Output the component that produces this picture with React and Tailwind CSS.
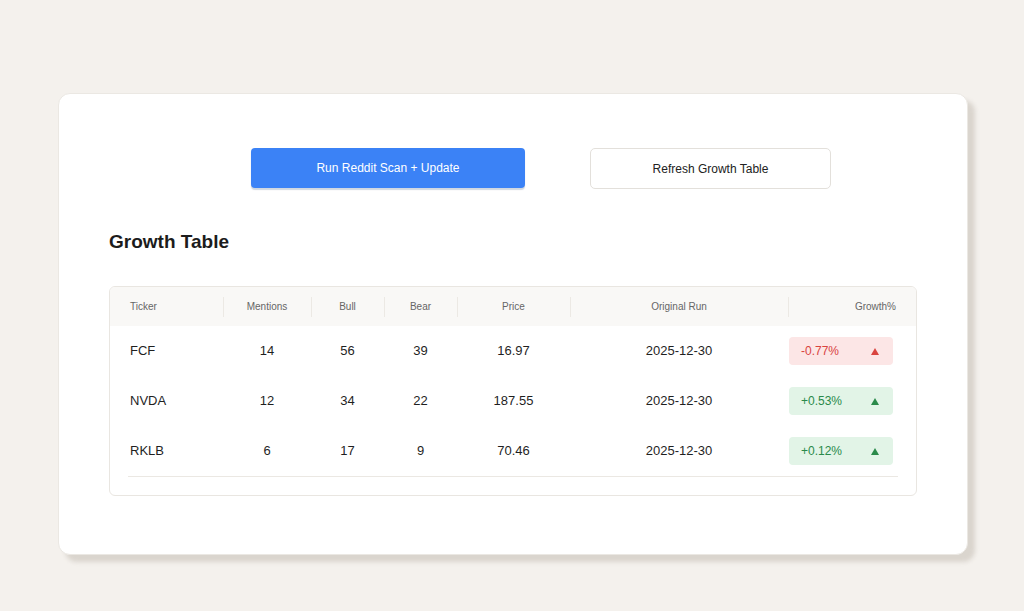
import React from "react";

const rows = [
  { t: "FCF", m: 14, b: 56, be: 39, p: "16.97", d: "2025-12-30", g: "-0.77%", neg: true },
  { t: "NVDA", m: 12, b: 34, be: 22, p: "187.55", d: "2025-12-30", g: "+0.53%", neg: false },
  { t: "RKLB", m: 6, b: 17, be: 9, p: "70.46", d: "2025-12-30", g: "+0.12%", neg: false },
];

const cols = "grid grid-cols-[95px_88px_73px_73px_113px_218px_109px]";

function Sep() {
  return <span className="absolute left-0 top-1/2 h-5 w-px -translate-y-1/2 bg-[#ece9e4]" />;
}

export default function App() {
  return (
    <div
      className="min-h-[611px] w-full bg-[#f4f1ed] pt-[93px] pl-[58px]"
      style={{ fontFamily: '"Liberation Sans", Arial, sans-serif' }}
    >
      <div className="h-[462px] w-[910px] rounded-xl bg-white border border-[#ebe8e3] shadow-[7px_7px_4px_rgba(160,150,135,0.3)] px-[50px] pt-[54px]">
        <div className="flex items-start ml-[142px] gap-[65px]">
          <button className="h-10 w-[274px] rounded-[4px] bg-[#3b82f6] text-[12px] text-white shadow-[0_2px_1px_rgba(120,140,170,0.35)]">
            Run Reddit Scan + Update
          </button>
          <button className="h-[41px] w-[241px] rounded-[5px] border border-[#e3e0db] bg-white text-[12px] text-[#222]">
            Refresh Growth Table
          </button>
        </div>
        <h2 className="mt-[41px] text-[19px] font-bold leading-6 text-[#1c1c1c]">Growth Table</h2>
        <div className="mt-[32px] w-[808px] rounded-[6px] border border-[#e9e6e1] overflow-hidden pb-[18px]">
          <div className="bg-[#f9f8f6] px-[18px]">
            <div className={`${cols} h-[39px] items-center text-[10px] text-[#666]`}>
              <div className="pl-[2px]">Ticker</div>
              <div className="relative text-center"><Sep />Mentions</div>
              <div className="relative text-center"><Sep />Bull</div>
              <div className="relative text-center"><Sep />Bear</div>
              <div className="relative text-center"><Sep />Price</div>
              <div className="relative text-center"><Sep />Original Run</div>
              <div className="relative text-right pr-[1px]"><Sep />Growth%</div>
            </div>
          </div>
          <div className="mx-[18px] border-b border-[#ebe8e3]">
            {rows.map((r) => (
              <div key={r.t} className={`${cols} h-[50px] items-center text-[13px] text-[#1f1f1f]`}>
                <div className="pl-[2px]">{r.t}</div>
                <div className="text-center">{r.m}</div>
                <div className="text-center">{r.b}</div>
                <div className="text-center">{r.be}</div>
                <div className="text-center">{r.p}</div>
                <div className="text-center">{r.d}</div>
                <div>
                  <div
                    className={`ml-[1px] flex h-[28px] w-[104px] items-center justify-between rounded-[4px] pl-3 pr-[14px] text-[12px] ${
                      r.neg ? "bg-[#fce6e6] text-[#d9443f]" : "bg-[#e2f4e7] text-[#2a8a4a]"
                    }`}
                  >
                    <span>{r.g}</span>
                    <svg width="8" height="7" viewBox="0 0 8 7">
                      <polygon points="4,0 8,7 0,7" fill="currentColor" />
                    </svg>
                  </div>
                </div>
              </div>
            ))}
          </div>
        </div>
      </div>
    </div>
  );
}
